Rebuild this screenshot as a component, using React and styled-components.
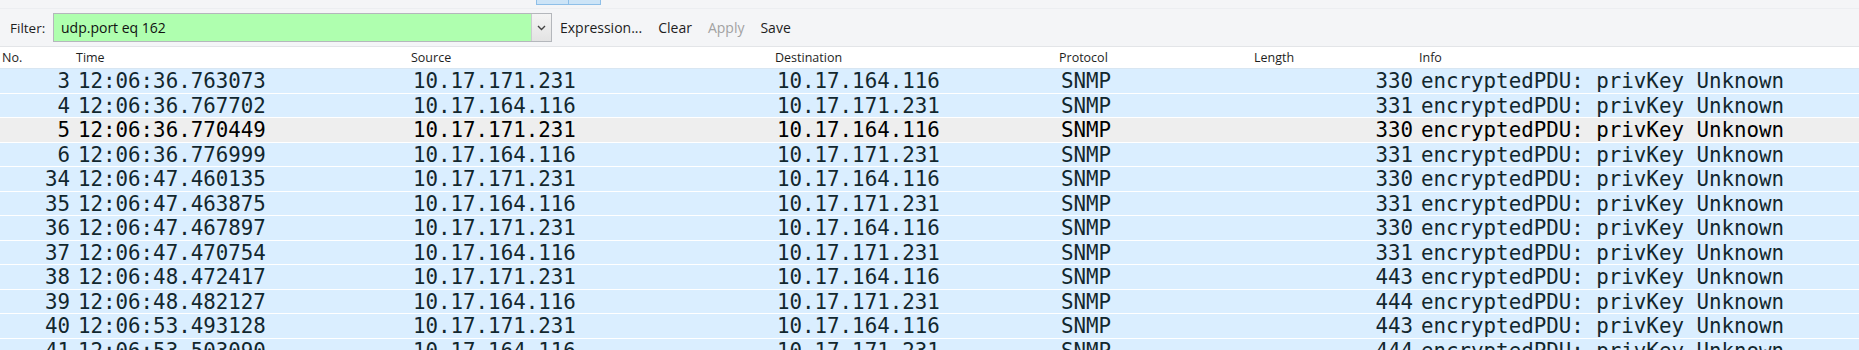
import React from "react";
import styled, { createGlobalStyle } from "styled-components";

const GlobalStyle = createGlobalStyle`
  body {
    margin: 0;
    background: #ffffff;
    overflow: hidden;
  }
`;

const packets = [
  { no: 3, time: "12:06:36.763073", src: "10.17.171.231", dst: "10.17.164.116", len: 330 },
  { no: 4, time: "12:06:36.767702", src: "10.17.164.116", dst: "10.17.171.231", len: 331 },
  { no: 5, time: "12:06:36.770449", src: "10.17.171.231", dst: "10.17.164.116", len: 330, selected: true },
  { no: 6, time: "12:06:36.776999", src: "10.17.164.116", dst: "10.17.171.231", len: 331 },
  { no: 34, time: "12:06:47.460135", src: "10.17.171.231", dst: "10.17.164.116", len: 330 },
  { no: 35, time: "12:06:47.463875", src: "10.17.164.116", dst: "10.17.171.231", len: 331 },
  { no: 36, time: "12:06:47.467897", src: "10.17.171.231", dst: "10.17.164.116", len: 330 },
  { no: 37, time: "12:06:47.470754", src: "10.17.164.116", dst: "10.17.171.231", len: 331 },
  { no: 38, time: "12:06:48.472417", src: "10.17.171.231", dst: "10.17.164.116", len: 443 },
  { no: 39, time: "12:06:48.482127", src: "10.17.164.116", dst: "10.17.171.231", len: 444 },
  { no: 40, time: "12:06:53.493128", src: "10.17.171.231", dst: "10.17.164.116", len: 443 },
  { no: 41, time: "12:06:53.503090", src: "10.17.164.116", dst: "10.17.171.231", len: 444 },
];

export default function App() {
  return (
    <Window>
      <GlobalStyle />
      <TopStrip>
        <ToolButton />
        <ToolButton />
      </TopStrip>
      <FilterBar>
        <FilterLabel>Filter:</FilterLabel>
        <FilterBox>
          <FilterText>udp.port eq 162</FilterText>
          <DropButton>
            <svg width="9" height="6" viewBox="0 0 9 6">
              <polyline points="1,1 4.5,4.5 8,1" fill="none" stroke="#444" strokeWidth="1.4" />
            </svg>
          </DropButton>
        </FilterBox>
        <Actions>
          <Action>Expression...</Action>
          <Action>Clear</Action>
          <Action disabled>Apply</Action>
          <Action>Save</Action>
        </Actions>
      </FilterBar>
      <HeaderRow>
        <HeaderCell>No.</HeaderCell>
        <HeaderCell>Time</HeaderCell>
        <HeaderCell>Source</HeaderCell>
        <HeaderCell>Destination</HeaderCell>
        <HeaderCell>Protocol</HeaderCell>
        <HeaderCell>Length</HeaderCell>
        <HeaderCell>Info</HeaderCell>
      </HeaderRow>
      <PacketList>
        {packets.map(p => (
          <PacketRow key={p.no} $selected={p.selected}>
            <Cell $right>{p.no}</Cell>
            <Cell>{p.time}</Cell>
            <Cell>{p.src}</Cell>
            <Cell>{p.dst}</Cell>
            <Cell>SNMP</Cell>
            <Cell $right>{p.len}</Cell>
            <Cell>encryptedPDU: privKey Unknown</Cell>
          </PacketRow>
        ))}
      </PacketList>
    </Window>
  );
}

const columns = "74px 335px 364px 284px 195px 165px 1fr";

const Window = styled.div`
  width: 1859px;
  height: 350px;
  overflow: hidden;
  background: #ffffff;
`;

const TopStrip = styled.div`
  display: flex;
  height: 8px;
  padding-left: 536px;
  background: #f4f5f7;
  border-bottom: 1px solid #eceef1;
`;

const ToolButton = styled.div`
  width: 31px;
  height: 4px;
  background: #cce4f7;
  border: 1px solid #8ebfe8;
  border-top: none;
  & + & {
    border-left: none;
  }
`;

const FilterBar = styled.div`
  display: flex;
  align-items: center;
  height: 37px;
  padding-left: 10px;
  background: #f4f5f7;
  border-bottom: 1px solid #e3e5e8;
  font-family: "Open Sans", "Noto Sans", sans-serif;
  font-size: 13.5px;
  color: #1e1e1e;
`;

const FilterLabel = styled.span`
  width: 43px;
`;

const FilterBox = styled.div`
  display: flex;
  width: 499px;
  height: 29px;
  box-sizing: border-box;
  border: 1px solid #b4b7bc;
  background: #afffaf;
`;

const FilterText = styled.div`
  flex: 1;
  display: flex;
  align-items: center;
  padding-left: 7px;
  font-size: 14px;
  color: #111;
`;

const DropButton = styled.div`
  width: 19px;
  display: flex;
  align-items: center;
  justify-content: center;
  border-left: 1px solid #c9cbce;
  background: linear-gradient(#f4f4f4, #e3e3e3);
`;

const Actions = styled.div`
  display: flex;
  gap: 16px;
  margin-left: 8px;
  font-size: 14px;
`;

const Action = styled.span`
  color: ${p => (p.disabled ? "#a2a2a2" : "#1e1e1e")};
`;

const HeaderRow = styled.div`
  display: grid;
  grid-template-columns: ${columns};
  height: 21px;
  align-items: center;
  background: #ffffff;
  border-bottom: 1px solid #d8e6f2;
  font-family: "Open Sans", "Noto Sans", sans-serif;
  font-size: 12.5px;
  color: #1e1e1e;
`;

const HeaderCell = styled.div`
  padding-left: 2px;
`;

const PacketList = styled.div`
  display: flex;
  flex-direction: column;
`;

const PacketRow = styled.div`
  display: grid;
  grid-template-columns: ${columns};
  height: 23.5px;
  align-items: center;
  border-bottom: 1px solid #ffffff;
  background: ${p => (p.$selected ? "#eeeeee" : "#daeeff")};
  color: ${p => (p.$selected ? "#000000" : "#12272e")};
  font-family: "DejaVu Sans Mono", "Liberation Mono", monospace;
  font-size: 20.8px;
  white-space: nowrap;
`;

const Cell = styled.div`
  padding: ${p => (p.$right ? "0 4px 0 0" : "0 0 0 4px")};
  text-align: ${p => (p.$right ? "right" : "left")};
`;
